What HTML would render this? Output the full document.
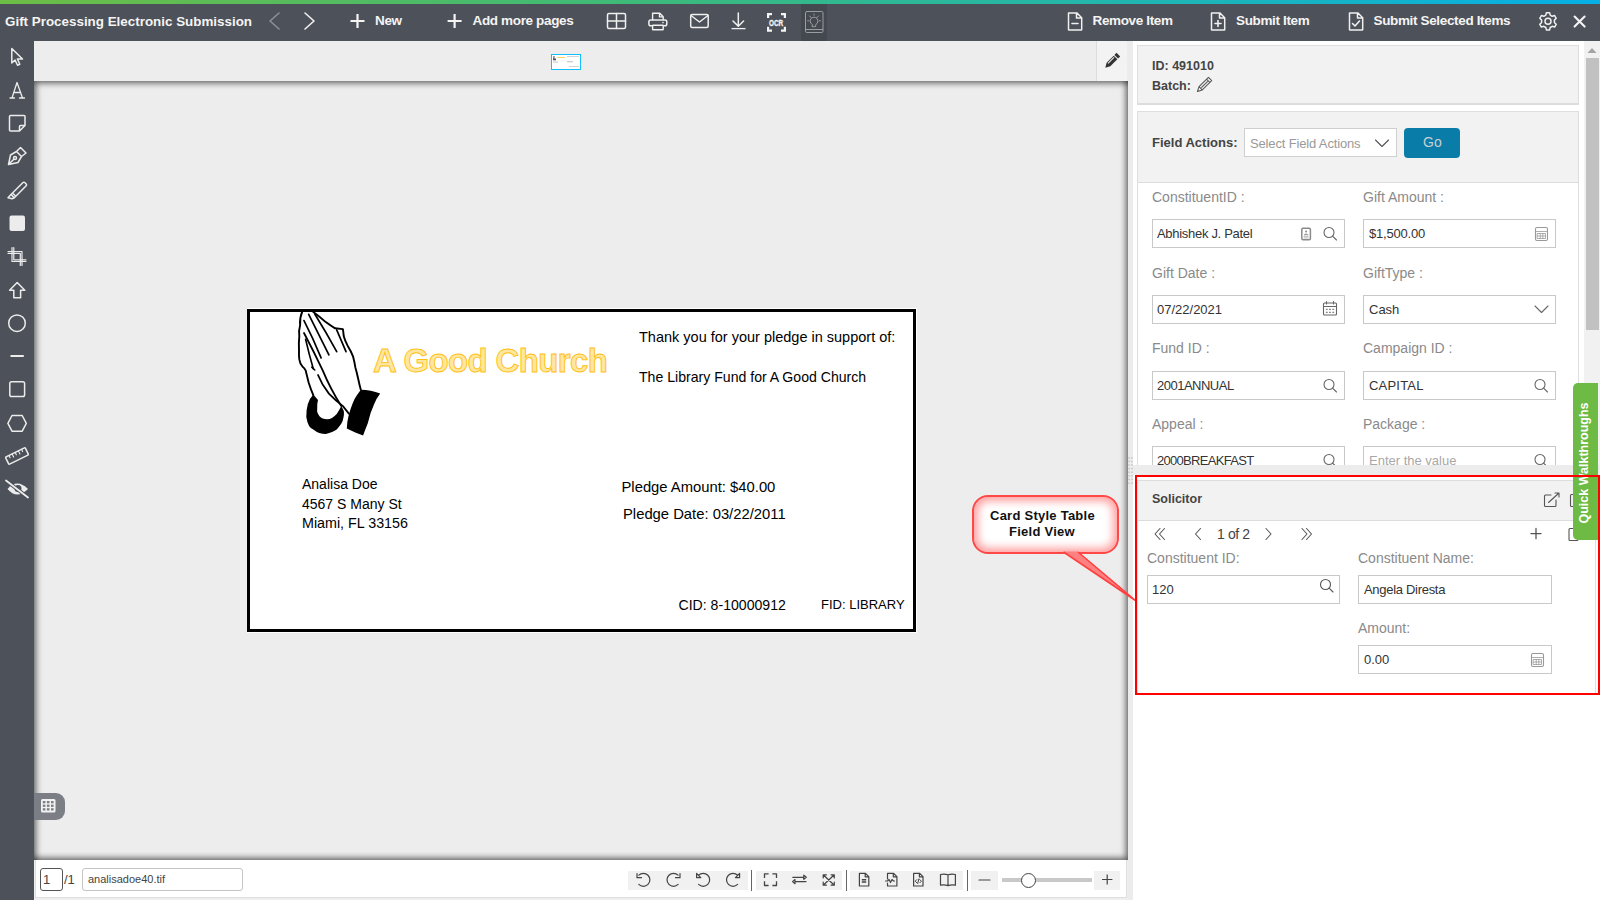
<!DOCTYPE html>
<html><head><meta charset="utf-8">
<style>
*{box-sizing:border-box;margin:0;padding:0}
html,body{width:1600px;height:900px;overflow:hidden;background:#fff;font-family:"Liberation Sans",sans-serif}
.a{position:absolute}
.t{position:absolute;white-space:nowrap;line-height:1}
svg{position:absolute;overflow:visible}
#grad{left:0;top:0;width:1600px;height:4px;background:linear-gradient(90deg,#6dbd45 0%,#3dba7a 40%,#1db5b8 75%,#06afe6 100%)}
#hdr{left:0;top:4px;width:1600px;height:37px;background:#4d5159}
#ltb{left:0;top:41px;width:34px;height:859px;background:#4d5159}
.hl{color:#f4f4f4;font-weight:bold;font-size:13.5px;letter-spacing:-0.35px}
.lb{font-size:14px;color:#8a8a8a}
.vl{font-size:13px;color:#333}
.doc{font-size:14px;color:#000}
.inp{width:193px;height:29px;border:1px solid #c9c9c9;background:#fff}
</style></head><body>
<div id="grad" class="a"></div>
<div id="hdr" class="a"></div>
<div id="ltb" class="a"></div>

<!-- HEADER -->
<div class="t hl" style="left:5px;top:15.3px;font-size:13.4px;letter-spacing:0">Gift Processing Electronic Submission</div>
<svg style="left:0;top:0" width="1600" height="41" fill="none" stroke-linecap="round" stroke-linejoin="round">
  <!-- prev/next -->
  <path d="M279 13 L270 21 L279 29" stroke="#8d9096" stroke-width="1.6"/>
  <path d="M305 13 L314 21 L305 29" stroke="#f0f0f0" stroke-width="1.6"/>
  <!-- plus New -->
  <path d="M357.5 14 V28 M350.5 21 H364.5" stroke="#f4f4f4" stroke-width="2.2" stroke-linecap="butt"/>
  <path d="M454.6 14 V28 M447.6 21 H461.6" stroke="#f4f4f4" stroke-width="2.2" stroke-linecap="butt"/>
  <!-- grid -->
  <rect x="607.5" y="13.5" width="18" height="15" rx="1.5" stroke="#f0f0f0" stroke-width="1.5"/>
  <path d="M616.5 13.5 V28.5 M607.5 21 H625.5" stroke="#f0f0f0" stroke-width="1.5"/>
  <!-- printer -->
  <path d="M652.6 19.8 V13.3 H659.8 L663.2 16.7 V19.8 M659.5 13.3 V16.9 H663.2" stroke="#f0f0f0" stroke-width="1.4"/>
  <rect x="648.9" y="19.9" width="17.9" height="5.8" rx="1.8" stroke="#f0f0f0" stroke-width="1.5"/>
  <rect x="652.6" y="25.2" width="10.6" height="4.6" rx="0.4" stroke="#f0f0f0" stroke-width="1.4" fill="#4d5159"/>
  <circle cx="663" cy="22.6" r="0.8" fill="#f0f0f0" stroke="none"/>
  <!-- mail -->
  <rect x="690.7" y="14.5" width="17.5" height="13" rx="1.5" stroke="#f0f0f0" stroke-width="1.5"/>
  <path d="M691 15.5 L699.5 22 L708 15.5" stroke="#f0f0f0" stroke-width="1.5"/>
  <!-- download -->
  <path d="M738.3 13 V26 M733 21 L738.3 26.3 L743.6 21" stroke="#f0f0f0" stroke-width="1.5"/><path d="M731.5 28.6 H745.5" stroke="#f0f0f0" stroke-width="1.3" stroke-linecap="butt"/>
  <!-- OCR -->
  <path d="M768.1 18 V14.1 H772 M781 14.1 H784.9 V18 M768.1 26.8 V30.7 H772 M781 30.7 H784.9 V26.8" stroke="#f4f4f4" stroke-width="2.2" stroke-linecap="butt" stroke-linejoin="miter"/>
  <text x="769" y="25.9" font-family="Liberation Sans" font-weight="bold" font-size="9.2" textLength="14.2" lengthAdjust="spacingAndGlyphs" fill="#f4f4f4" stroke="#f4f4f4" stroke-width="0.3">OCR</text>
</svg>
<div class="a" style="left:801px;top:4px;width:26px;height:37px;background:#44484f"></div>
<svg style="left:0;top:0" width="1600" height="41" fill="none" stroke-linecap="round" stroke-linejoin="round">
  <rect x="805.5" y="11.5" width="17.5" height="21" rx="1.2" stroke="#9a9da2" stroke-width="1"/>
  <path d="M805.8 29.5 H822.7" stroke="#9a9da2" stroke-width="1"/>
  <path d="M812.3 24.6 A3.9 3.9 0 1 1 815.7 24.6 V26.7 H812.3 Z" stroke="#9a9da2" stroke-width="1"/>
  <path d="M814 14 V15.2 M807.6 20.8 H808.8 M819.2 20.8 H820.4 M809.5 15.9 L811 17.6 M818.5 15.9 L817 17.6" stroke="#9a9da2" stroke-width="1"/>
  <!-- remove item doc -->
  <path d="M1068.5 13 H1077 L1081.7 17.7 V29.5 A0.5 0.5 0 0 1 1081.2 30 H1069 A0.5 0.5 0 0 1 1068.5 29.5 Z M1076.5 13 V18 H1081.7" stroke="#f0f0f0" stroke-width="1.5"/>
  <path d="M1072 23.5 H1078" stroke="#f0f0f0" stroke-width="1.6"/>
  <!-- submit item doc -->
  <path d="M1211.5 13 H1220 L1224.7 17.7 V29.5 A0.5 0.5 0 0 1 1224.2 30 H1212 A0.5 0.5 0 0 1 1211.5 29.5 Z M1219.5 13 V18 H1224.7" stroke="#f0f0f0" stroke-width="1.5"/>
  <path d="M1215 23.5 H1221 M1218 20.5 V26.5" stroke="#f0f0f0" stroke-width="1.6"/>
  <!-- submit selected doc -->
  <path d="M1349.5 13 H1358 L1362.7 17.7 V29.5 A0.5 0.5 0 0 1 1362.2 30 H1350 A0.5 0.5 0 0 1 1349.5 29.5 Z M1357.5 13 V18 H1362.7" stroke="#f0f0f0" stroke-width="1.5"/>
  <path d="M1352.5 23.5 L1355 26 L1359.5 21" stroke="#f0f0f0" stroke-width="1.6"/>
  <!-- gear -->
  <g transform="translate(1548,21.3)" stroke="#f0f0f0" stroke-width="1.5">
    <path d="M-1.6 -8.6 H1.6 L2.2 -6.2 L4.2 -5 L6.6 -5.8 L8.2 -3 L6.4 -1.2 V1.2 L8.2 3 L6.6 5.8 L4.2 5 L2.2 6.2 L1.6 8.6 H-1.6 L-2.2 6.2 L-4.2 5 L-6.6 5.8 L-8.2 3 L-6.4 1.2 V-1.2 L-8.2 -3 L-6.6 -5.8 L-4.2 -5 L-2.2 -6.2 Z"/>
    <circle r="3"/>
  </g>
  <!-- X -->
  <path d="M1574.6 16.6 L1584.6 26.6 M1584.6 16.6 L1574.6 26.6" stroke="#f4f4f4" stroke-width="2.1"/>
</svg>
<div class="t hl" style="left:375px;top:14.2px">New</div>
<div class="t hl" style="left:472.5px;top:14.2px">Add more pages</div>
<div class="t hl" style="left:1092.5px;top:14.2px">Remove Item</div>
<div class="t hl" style="left:1236px;top:14.2px">Submit Item</div>
<div class="t hl" style="left:1373.5px;top:14.2px">Submit Selected Items</div>

<!-- LEFT TOOLBAR -->
<svg style="left:0;top:0" width="34" height="520" fill="none" stroke="#ececec" stroke-width="1.5" stroke-linejoin="round" stroke-linecap="round">
  <!-- cursor -->
  <path d="M11.8 48.5 V63 L15 60 L17.5 65.3 L19.8 64.3 L17.4 59 H22.5 Z"/>
  <!-- A serif -->
  <path d="M10 98 H14.5 M19.5 98 H24.5 M12 98 L17 82.5 L22.5 98 M13.8 92.5 H20.5" stroke-width="1.3"/>
  <!-- sticky note -->
  <path d="M10.5 115.5 H24 A1 1 0 0 1 25 116.5 V125.5 L19.5 131 H10.5 A1 1 0 0 1 9.5 130 V116.5 A1 1 0 0 1 10.5 115.5 Z M25 125.5 H20.5 A1 1 0 0 0 19.5 126.5 V131"/>
  <!-- fountain pen -->
  <path d="M8.5 164.5 L10.5 155 L16.5 151.5 L21.5 156.5 L18 162.5 Z M16.5 151.5 L20.5 147.5 L26 153 L21.5 156.5 M8.5 164.5 L13.8 159.2"/>
  <circle cx="15" cy="158" r="1.5"/>
  <!-- highlighter -->
  <path d="M12.5 193 L23 182.5 A1.2 1.2 0 0 1 24.7 182.5 L26.2 184 A1.2 1.2 0 0 1 26.2 185.7 L15.8 196.2 Z M12.5 193 L11 194.5 L14.3 197.8 L15.8 196.2 M11 194.5 L8 197.8 L12 198.8 L14.3 197.8"/>
  <!-- filled square -->
  <rect x="9.5" y="215.5" width="15.5" height="15.5" rx="2" fill="#ececec" stroke="none"/>
  <!-- crop -->
  <path d="M12 247.5 V261.5 H26 M8 251.5 H22 V265.5" stroke-width="1.2"/>
  <path d="M13.8 247.5 V259.8 H26 M8 253.3 H20.3 V265.5" stroke-width="1.2"/>
  <!-- arrow up -->
  <path d="M17.2 282.5 L24.8 290.2 H20.6 V297.8 H13.8 V290.2 H9.6 Z"/>
  <!-- circle -->
  <circle cx="17" cy="323.2" r="8.3"/>
  <!-- line -->
  <path d="M10.5 356 H23.8" stroke-width="2" stroke-linecap="butt"/>
  <!-- square -->
  <rect x="9.8" y="381.8" width="14.8" height="14.7" rx="1.8"/>
  <!-- hexagon -->
  <path d="M12 415.5 H22.2 L26.3 423.3 L22.2 431.2 H12 L7.9 423.3 Z"/>
  <!-- ruler -->
  <g transform="translate(17,456) rotate(-26)">
    <rect x="-11" y="-4" width="22" height="8" rx="0.8"/>
    <path d="M-7 -4 V-1.5 M-3.5 -4 V-0.5 M0 -4 V-1.5 M3.5 -4 V-0.5 M7 -4 V-1.5" stroke-width="1.1"/>
  </g>
  <!-- eye slash -->
  <path d="M7.5 489 Q17 478 28 489 Q17 500 7.5 489 Z" fill="#ececec" stroke="none"/>
  <circle cx="18" cy="488.5" r="3.5" fill="#4d5159" stroke="none"/>
  <path d="M6 480.5 L28 497.5" stroke="#4d5159" stroke-width="3.5"/>
  <path d="M6 480.5 L28 497.5" stroke-width="1.8"/>
</svg>

<!-- VIEWER -->
<div class="a" style="left:34px;top:41px;width:1062px;height:40px;background:#ededed"></div>
<div class="a" style="left:1096px;top:41px;width:1px;height:40px;background:#dcdcdc"></div>
<div class="a" style="left:1097px;top:41px;width:30px;height:40px;background:#f3f3f3"></div>
<div class="a" style="left:1127px;top:41px;width:6px;height:859px;background:#ececec"></div>
<div class="a" style="left:551px;top:54px;width:30px;height:16px;border:1px solid #12bff9;background:#fff"></div>
<svg style="left:0;top:0" width="600" height="80">
  <rect x="553" y="56" width="1.8" height="3" fill="#999"/>
  <rect x="553" y="58.5" width="3" height="1.8" fill="#555"/>
  <rect x="557" y="57" width="8" height="1" fill="#ffd45a"/>
  <rect x="567" y="56" width="12" height="0.8" fill="#c8c8c8"/>
  <rect x="553" y="61.5" width="5" height="1.2" fill="#d0d0d0"/>
  <rect x="567" y="61" width="6" height="1.4" fill="#d0d0d0"/>
  <rect x="569" y="66" width="10" height="0.8" fill="#c8c8c8"/>
</svg>
<svg style="left:0;top:0" width="1600" height="100">
  <g transform="translate(1112,61) rotate(45)">
    <rect x="-2.6" y="-9" width="5.2" height="3" fill="#333"/>
    <path d="M-2.6 -5 H2.6 V5 L0 9.5 L-2.6 5 Z" fill="#333"/>
    <path d="M-1.2 -4 V4.5" stroke="#f3f3f3" stroke-width="1"/>
  </g>
</svg>
<div class="a" style="left:34px;top:81px;width:1094px;height:779px;background:#ededed;box-shadow:inset 4px 4px 6px -2px rgba(0,0,0,.6),inset -4px -4px 6px -2px rgba(0,0,0,.6)"></div>
<!-- DOCUMENT -->
<div class="a" style="left:247px;top:308px;width:670px;height:325px;background:#fff"></div>
<div class="a" style="left:247px;top:309px;width:669px;height:323px;border:3px solid #000"></div>
<svg style="left:0;top:0" width="1000" height="700" fill="none" stroke="#000" stroke-width="1.6" stroke-linejoin="round" stroke-linecap="round">
  <!-- cuffs -->
  <path d="M313.3 394.4 Q306 402 306.3 417 Q308 428 313.3 429.4 Q319 434 325.8 434.1 Q333 432 336.7 429.4 Q342 424 342.9 420.1 Q344.5 414 343.7 410.8 L341.3 406.1 Q339 411 336.7 413.9 Q332 419 327.3 419.3 Q322 419 319.5 416.2 Q316.5 412 317.2 409.2 Q317 403 318 399.9 Z" fill="#000" stroke="none"/>
  <path d="M360.8 389.8 Q371 390 380.2 393.6 Q376 399 374 404.5 Q370 413 367.8 423.2 Q365 430 363.1 435.6 L355.3 432.5 L346.8 428.6 Q347 422 348.3 417 Q350 410 352.2 404.5 Q354 399 356.9 395.2 Z" fill="#000" stroke="none"/>
  <!-- hands outline -->
  <path d="M302.4 311.2 Q299.5 318 300.1 325.2 Q298.5 331 299.3 336.1 Q298.6 343 299 350.1 Q298.8 355 299.3 359.4 Q300 364 302.4 366.4 Q304.5 368 305.6 370.3 Q307 376 308.7 382.8 Q311 390 313.3 395.2" stroke-width="1.9"/>
  <path d="M313.3 312 Q320 317 325.8 322.1 Q331 326 335.1 328.3 L342.9 329.1 Q343.5 333 343.7 336.1 Q345 341 347.5 345.4 Q351 351 353 356.3 Q354.5 362 355.3 367.2 Q357 373 358.4 379.7 Q359.5 385 360.8 389.8" stroke-width="1.9"/>
  <path d="M304 320.6 Q313 338 321.1 357.9" stroke-width="1.7"/>
  <path d="M308.7 314.3 Q318 333 328.9 354.8" stroke-width="1.7"/>
  <path d="M314.9 314.3 Q326 332 336.7 351.7" stroke-width="1.7"/>
  <path d="M336.7 329.9 Q341 340 346 351.7" stroke-width="1.7"/>
  <path d="M304 333 Q314 352 322.7 370.3 Q330 388 341.3 406.1" stroke-width="1.8"/>
  <path d="M305.6 339.2 Q309 354 313.3 368.8" stroke-width="1.6"/>
  <path d="M311.8 367.2 L314.8 370" stroke-width="1.6"/>
  <path d="M318 375 Q322 385 328.9 393.6 Q335 400 342.9 406.1 Q346 410 349.1 413.9" stroke-width="1.8"/>
</svg>
<div class="t" style="left:373px;top:344.4px;font-size:33px;font-weight:bold;letter-spacing:-0.65px;color:#ffe7a0;-webkit-text-stroke:0.9px #ffbf10">A Good Church</div>
<div class="t doc" style="left:639px;top:330.3px;font-size:14.5px">Thank you for your pledge in support of:</div>
<div class="t doc" style="left:639px;top:369.5px;font-size:14.1px">The Library Fund for A Good Church</div>
<div class="t doc" style="left:302px;top:476.9px">Analisa Doe</div>
<div class="t doc" style="left:302px;top:496.5px">4567 S Many St</div>
<div class="t doc" style="left:302px;top:516px;font-size:14.3px">Miami, FL 33156</div>
<div class="t doc" style="left:621.5px;top:479.8px;font-size:14.8px">Pledge Amount: $40.00</div>
<div class="t doc" style="left:623px;top:506.5px;font-size:14.8px">Pledge Date: 03/22/2011</div>
<div class="t doc" style="left:678.5px;top:597.6px;font-size:14.1px">CID: 8-10000912</div>
<div class="t doc" style="left:821px;top:597.6px;font-size:13px">FID: LIBRARY</div>
<!-- footer -->
<div class="a" style="left:34px;top:860px;width:1094px;height:40px;background:#efefef"></div>
<div class="a" style="left:35px;top:860px;width:1092px;height:38px;background:#fff;border:1px solid #dedede;border-top:none"></div>
<div class="a" style="left:40px;top:868px;width:23px;height:23px;border:1px solid #555;border-radius:3px;background:#fff"></div>
<div class="t" style="left:43px;top:873px;font-size:13px;color:#444">1</div>
<div class="t" style="left:64px;top:873px;font-size:13px;color:#444">/1</div>
<div class="a" style="left:82px;top:868px;width:161px;height:23px;border:1px solid #c4c4c4;border-radius:3px;background:#fff"></div>
<div class="t" style="left:88px;top:874px;font-size:11px;color:#444">analisadoe40.tif</div>
<div class="a" style="left:628px;top:871px;width:120px;height:19px;background:#f1f1f1"></div>
<div class="a" style="left:751px;top:870px;width:1px;height:21px;background:#666"></div>
<div class="a" style="left:756px;top:871px;width:86px;height:19px;background:#f1f1f1"></div>
<div class="a" style="left:846px;top:870px;width:1px;height:21px;background:#666"></div>
<div class="a" style="left:850px;top:871px;width:113px;height:19px;background:#f1f1f1"></div>
<div class="a" style="left:967px;top:870px;width:1px;height:21px;background:#666"></div>
<div class="a" style="left:971px;top:871px;width:27px;height:19px;background:#f1f1f1"></div>
<div class="a" style="left:1094px;top:871px;width:26px;height:19px;background:#f1f1f1"></div>
<div class="a" style="left:1002px;top:878px;width:90px;height:4px;background:#c8c8c8"></div>
<div class="a" style="left:1020.5px;top:872.5px;width:15px;height:15px;border:1.2px solid #444;border-radius:50%;background:#fff"></div>
<svg style="left:0;top:0" width="1200" height="900" fill="none" stroke="#444" stroke-width="1.2" stroke-linecap="round" stroke-linejoin="round">
  <path d="M638.8 875.2 A6.5 6.5 0 1 1 638.8 884.4 M637 873.5 V877.7 H641.5"/>
  <path d="M678.1 875.2 A6.5 6.5 0 1 0 678.1 884.4 M680 873.5 V877.7 H675.5"/>
  <path d="M698.6 875.2 A6.5 6.5 0 1 1 698.6 884.4 M696.6 873.5 V877.6 H700.8 Z"/>
  <path d="M737.6 875.2 A6.5 6.5 0 1 0 737.6 884.4 M739.6 873.5 V877.6 H735.4 Z"/>
  <path d="M764.5 878 V873.8 H768.6 M772.4 873.8 H776.5 V878 M764.5 881.3 V885.5 H768.6 M772.4 885.5 H776.5 V881.3" stroke-linecap="butt" stroke-width="1.3"/>
  <path d="M792.8 877.3 H803.8 M803.8 875.2 L806.3 877.3 L803.8 879.4 Z M806 881.6 H795 M795 879.5 L792.5 881.6 L795 883.7 Z"/>
  <path d="M823.5 875 L834 885 M834 875 L823.5 885 M823.2 874.8 V878 M823.2 874.8 H826.4 M834.3 874.8 V878 M834.3 874.8 H831.1 M823.2 885.2 V882 M823.2 885.2 H826.4 M834.3 885.2 V882 M834.3 885.2 H831.1"/>
  <path d="M859.4 873.4 H865.5 L868.8 876.7 V886 H859.4 Z M865.2 873.6 V876.8 H868.6"/>
  <path d="M861.8 879.8 H866.2 M861.8 882 H866.2" stroke-width="1.4" stroke-linecap="butt"/>
  <path d="M887.5 873.4 H893.6 L896.9 876.7 V886 H887.5 V883 M887.5 879 V873.4 M893.3 873.6 V876.8 H896.7"/>
  <path d="M885.5 881 H887.5 L889 879.5 L890.5 882.5 L892 879.5 L893.5 881 H894.5"/>
  <path d="M913.6 873.4 H919.7 L923 876.7 V886 H913.6 Z M919.4 873.6 V876.8 H922.8"/>
  <path d="M916.8 879.6 L915.2 881.2 L916.8 882.8 M919.8 879.6 L921.4 881.2 L919.8 882.8 M918.9 878.9 L917.7 883.5" stroke-width="1"/>
  <path d="M940.5 874.5 Q944.3 873.5 948 874.8 V885.6 Q944.3 884.3 940.5 885.2 Z M948 874.8 Q951.7 873.5 955.4 874.5 V885.2 Q951.7 884.3 948 885.6 Z"/>
  <path d="M979 880 H990" stroke-width="1.2"/>
  <path d="M1102 879.5 H1112.4 M1107.2 874.5 V884.5" stroke-width="1.2" stroke-linecap="butt"/>
</svg>
<!-- grid btn -->
<div class="a" style="left:34px;top:793px;width:31px;height:27px;background:#7b7f85;border-radius:0 9px 9px 0"></div>
<svg style="left:0;top:790px" width="80" height="40" fill="#f2f2f2">
  <rect x="41" y="9" width="14.5" height="13.5" rx="1.5"/>
  <g fill="#7b7f85">
    <rect x="42.8" y="11" width="2.6" height="2.3"/><rect x="46.9" y="11" width="2.6" height="2.3"/><rect x="51" y="11" width="2.6" height="2.3"/>
    <rect x="42.8" y="14.6" width="2.6" height="2.3"/><rect x="46.9" y="14.6" width="2.6" height="2.3"/><rect x="51" y="14.6" width="2.6" height="2.3"/>
    <rect x="42.8" y="18.2" width="2.6" height="2.3"/><rect x="46.9" y="18.2" width="2.6" height="2.3"/><rect x="51" y="18.2" width="2.6" height="2.3"/>
  </g>
</svg>

<!-- RIGHT PANEL -->
<div class="a" style="left:1584px;top:41px;width:16px;height:424px;background:#f1f1f1"></div>
<div class="a" style="left:1586px;top:58px;width:13px;height:272px;background:#c1c1c1"></div>
<svg style="left:0;top:0" width="1600" height="100"><path d="M1587.5 53 L1592 48 L1596.5 53 Z" fill="#a3a3a3"/></svg>
<div class="a" style="left:1137px;top:45px;width:442px;height:60px;background:#f2f2f2;border:1px solid #dedede;border-bottom:2px solid #dcdcdc"></div>
<div class="t" style="left:1152px;top:60px;font-size:12.5px;font-weight:bold;color:#444">ID: 491010</div>
<div class="t" style="left:1152px;top:80px;font-size:12.5px;font-weight:bold;color:#444">Batch:</div>
<svg style="left:0;top:0" width="1600" height="100" fill="none" stroke="#555" stroke-width="1" stroke-linejoin="round">
  <g transform="translate(1204.2,84.8) rotate(45)"><path d="M-2.3 -8.3 H2.3 V5 L0 9.5 L-2.3 5 Z M-2.3 -5.6 H2.3 M-2.3 5 H2.3 M0 -5 V4" stroke-width="1.05"/></g>
</svg>
<div class="a" style="left:1137px;top:111px;width:442px;height:400px;background:#fff;border:1px solid #dedede"></div>
<div class="a" style="left:1138px;top:112px;width:440px;height:71px;background:#f2f2f2;border-bottom:1px solid #dcdcdc"></div>
<div class="t" style="left:1152px;top:136px;font-size:13px;font-weight:bold;color:#444">Field Actions:</div>
<div class="a" style="left:1244px;top:128px;width:153px;height:29px;background:#fff;border:1px solid #cfcfcf"></div>
<div class="t" style="left:1250px;top:137px;font-size:13px;color:#9a9a9a;letter-spacing:-0.15px">Select Field Actions</div>
<div class="a" style="left:1404px;top:128px;width:56px;height:30px;background:#0a7ca8;border-radius:4px"></div>
<div class="t" style="left:1423px;top:135px;font-size:14px;color:#c7cfd3">Go</div>
<svg style="left:0;top:0" width="1600" height="700" fill="none" stroke="#555" stroke-width="1.1" stroke-linecap="round" stroke-linejoin="round">
  <path d="M1375.5 140 L1382 146.5 L1388.5 140"/>
</svg>

<!-- form labels -->
<div class="t lb" style="left:1152px;top:190px">ConstituentID :</div>
<div class="t lb" style="left:1363px;top:190px">Gift Amount :</div>
<div class="t lb" style="left:1152px;top:266px">Gift Date :</div>
<div class="t lb" style="left:1363px;top:266px">GiftType :</div>
<div class="t lb" style="left:1152px;top:341px">Fund ID :</div>
<div class="t lb" style="left:1363px;top:341px">Campaign ID :</div>
<div class="t lb" style="left:1152px;top:417px">Appeal :</div>
<div class="t lb" style="left:1363px;top:417px">Package :</div>
<div class="a inp" style="left:1152px;top:219px"></div>
<div class="a inp" style="left:1363px;top:219px"></div>
<div class="a inp" style="left:1152px;top:295px"></div>
<div class="a inp" style="left:1363px;top:295px"></div>
<div class="a inp" style="left:1152px;top:371px"></div>
<div class="a inp" style="left:1363px;top:371px"></div>
<div class="a inp" style="left:1152px;top:446px"></div>
<div class="a inp" style="left:1363px;top:446px"></div>
<div class="t vl" style="left:1157px;top:227px;letter-spacing:-0.3px">Abhishek J. Patel</div>
<div class="t vl" style="left:1369px;top:227px;letter-spacing:-0.2px">$1,500.00</div>
<div class="t vl" style="left:1157px;top:303px">07/22/2021</div>
<div class="t vl" style="left:1369px;top:303px">Cash</div>
<div class="t vl" style="left:1157px;top:379px;letter-spacing:-0.5px">2001ANNUAL</div>
<div class="t vl" style="left:1369px;top:379px;letter-spacing:0.2px">CAPITAL</div>
<div class="t vl" style="left:1157px;top:454px;letter-spacing:-0.7px">2000BREAKFAST</div>
<div class="t vl" style="left:1369px;top:454px;color:#a8a8a8">Enter the value</div>
<svg style="left:0;top:0" width="1600" height="700" fill="none" stroke="#666" stroke-width="1.1" stroke-linecap="round" stroke-linejoin="round">
  <!-- contact card -->
  <rect x="1301.8" y="228.2" width="8.6" height="11.6" rx="1.2" stroke="#8a8a8a" stroke-width="1.5"/>
  <circle cx="1306.1" cy="231.6" r="1" fill="#8a8a8a" stroke="none"/>
  <path d="M1304.3 234.6 Q1306.1 232.8 1307.9 234.6 Z" fill="#8a8a8a" stroke="#8a8a8a" stroke-width="0.6"/>
  <path d="M1304 236.6 H1308.2 M1304 238 H1308.2" stroke="#aaa" stroke-width="0.8"/>
  <!-- searches -->
  <g id="sr"><circle cx="1329" cy="232.5" r="5"/><path d="M1332.6 236.1 L1336.5 240"/></g>
  <use href="#sr" y="152"/><use href="#sr" x="211" y="152"/>
  <use href="#sr" y="227"/><use href="#sr" x="211" y="227"/>
  <!-- calc -->
  <rect x="1535.5" y="227.5" width="12" height="13" rx="1.5" stroke="#999"/>
  <path d="M1535.5 231.5 H1547.5 M1537.5 233.5 H1545.5 V238.5 H1537.5 Z M1540.2 233.5 V238.5 M1542.8 233.5 V238.5 M1537.5 236 H1545.5" stroke-width="0.8" stroke="#999"/>
  <!-- calendar -->
  <rect x="1323.5" y="303" width="13" height="12" rx="1"/>
  <path d="M1323.5 306.5 H1336.5 M1326.5 301.5 V304 M1333.5 301.5 V304" />
  <path d="M1326.3 309.2 h1 M1329.5 309.2 h1 M1332.7 309.2 h1 M1326.3 312.2 h1 M1329.5 312.2 h1 M1332.7 312.2 h1" stroke-width="1.1"/>
  <!-- chevron -->
  <path d="M1535 306 L1541.5 312.5 L1548 306"/>
</svg>
<!-- splitter -->
<div class="a" style="left:1133px;top:465px;width:467px;height:10px;background:#ececec"></div>
<div class="a" style="left:1133px;top:475px;width:467px;height:425px;background:#fff"></div>
<svg style="left:0;top:0" width="1600" height="500" fill="#c4c4c4"><rect x="1128.3" y="457.1" width="1.5" height="1.5"/><rect x="1131.3" y="457.1" width="1.5" height="1.5"/><rect x="1128.3" y="460.7" width="1.5" height="1.5"/><rect x="1131.3" y="460.7" width="1.5" height="1.5"/><rect x="1128.3" y="464.2" width="1.5" height="1.5"/><rect x="1131.3" y="464.2" width="1.5" height="1.5"/><rect x="1128.3" y="467.9" width="1.5" height="1.5"/><rect x="1131.3" y="467.9" width="1.5" height="1.5"/><rect x="1128.3" y="471.5" width="1.5" height="1.5"/><rect x="1131.3" y="471.5" width="1.5" height="1.5"/><rect x="1128.3" y="475.1" width="1.5" height="1.5"/><rect x="1131.3" y="475.1" width="1.5" height="1.5"/><rect x="1128.3" y="478.7" width="1.5" height="1.5"/><rect x="1131.3" y="478.7" width="1.5" height="1.5"/><rect x="1128.3" y="482.4" width="1.5" height="1.5"/><rect x="1131.3" y="482.4" width="1.5" height="1.5"/></svg>
<!-- solicitor card -->
<div class="a" style="left:1137px;top:480px;width:459px;height:214px;background:#fff;border:1px solid #dedede"></div>
<div class="a" style="left:1138px;top:481px;width:457px;height:40px;background:#f2f2f2;border-bottom:1px solid #dcdcdc"></div>
<div class="t" style="left:1152px;top:493px;font-size:12.5px;font-weight:bold;color:#444">Solicitor</div>
<div class="t" style="left:1217px;top:527px;font-size:14px;color:#444;letter-spacing:-0.4px">1 of 2</div>
<div class="t lb" style="left:1147px;top:551px">Constituent ID:</div>
<div class="t lb" style="left:1358px;top:551px">Constituent Name:</div>
<div class="t lb" style="left:1358px;top:621px">Amount:</div>
<div class="a inp" style="left:1147px;top:575px"></div>
<div class="a inp" style="left:1358px;top:575px;width:194px"></div>
<div class="a inp" style="left:1358px;top:645px;width:194px"></div>
<div class="t vl" style="left:1152px;top:583px">120</div>
<div class="t vl" style="left:1364px;top:583px;letter-spacing:-0.3px">Angela Diresta</div>
<div class="t vl" style="left:1364px;top:653px">0.00</div>
<svg style="left:0;top:0" width="1600" height="700" fill="none" stroke="#555" stroke-width="1.1" stroke-linecap="round" stroke-linejoin="round">
  <path d="M1160 528.5 L1155 534 L1160 539.5 M1164.5 528.5 L1159.5 534 L1164.5 539.5"/>
  <path d="M1200.5 528.5 L1195.5 534 L1200.5 539.5"/>
  <path d="M1266 528.5 L1271 534 L1266 539.5"/>
  <path d="M1302 528.5 L1307 534 L1302 539.5 M1306.5 528.5 L1311.5 534 L1306.5 539.5"/>
  <path d="M1536 528.5 V538.7 M1531 533.6 H1541" stroke-width="1.3"/>
  <rect x="1569" y="528.5" width="9" height="12" rx="1"/>
  <path d="M1551 495 H1545.5 A1 1 0 0 0 1544.5 496 V505.5 A1 1 0 0 0 1545.5 506.5 H1555 A1 1 0 0 0 1556 505.5 V500 M1548.5 502.5 L1559 493 M1555 493 H1559 V497"/>
  <rect x="1570.5" y="494.5" width="8" height="12" rx="1"/>
  <g transform="translate(-3.5,352)"><circle cx="1329" cy="232.5" r="5"/><path d="M1332.6 236.1 L1336.5 240"/></g>
  <rect x="1531.5" y="653.5" width="12" height="13" rx="1.5" stroke="#999"/>
  <path d="M1531.5 657.5 H1543.5 M1533.5 659.5 H1541.5 V664.5 H1533.5 Z M1536.2 659.5 V664.5 M1538.8 659.5 V664.5 M1533.5 662 H1541.5" stroke="#999" stroke-width="0.8"/>
</svg>
<!-- quick walkthroughs -->
<div class="a" style="left:1573px;top:383px;width:25px;height:157px;background:#6dbb44;border-radius:5px 0 0 5px"></div>
<div class="t" style="left:1584.4px;top:462.5px;font-size:12.5px;font-weight:bold;color:#fff;transform:translate(-50%,-50%) rotate(-90deg)">Quick Walkthroughs</div>
<!-- callout -->
<div class="a" style="left:971.5px;top:494.5px;width:147px;height:59px;border:2px solid #ff4848;border-radius:16px;background:#fff;box-shadow:inset 0 0 9px 4px #ffa0a0"></div>
<svg style="left:0;top:0" width="1200" height="700">
  <path d="M1063.5 551.5 L1135.5 600.5 L1078 551.5 Z" fill="#ff8080"/>
  <path d="M1063.5 552 L1135.5 600.5 L1078 552" fill="none" stroke="#ff4040" stroke-width="1.6" stroke-linejoin="round"/>
</svg>
<div class="t" style="left:990px;top:509.3px;font-size:13px;font-weight:bold;color:#111;letter-spacing:0.25px">Card Style Table</div>
<div class="t" style="left:1009px;top:525.2px;font-size:13px;font-weight:bold;color:#111;letter-spacing:0.25px">Field View</div>
<!-- red annotation -->
<div class="a" style="left:1135px;top:475px;width:465px;height:220px;border:2px solid #ff0000"></div>

</body></html>
